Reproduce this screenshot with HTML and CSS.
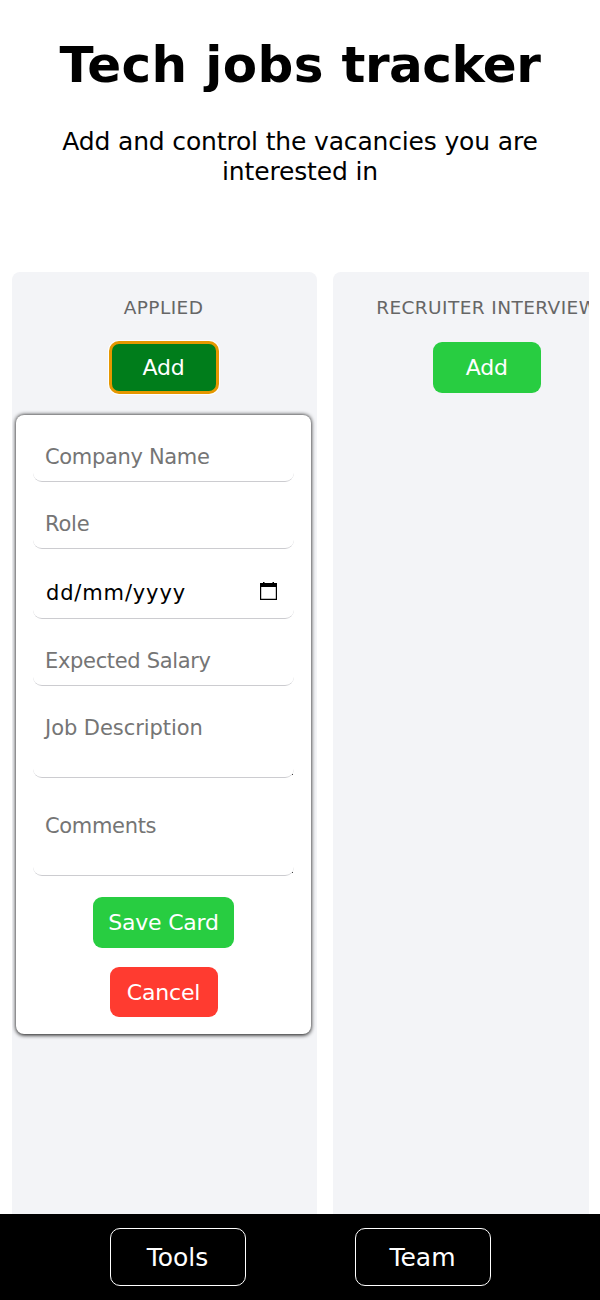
FILE: index.html
```html
<!DOCTYPE html>
<html lang="en">
<head>
<meta charset="utf-8">
<title>Tech jobs tracker</title>
<link rel="stylesheet" href="styles.css">
</head>
<body>
<header class="header">
  <h1 class="title">Tech jobs <span class="tight">tracker</span></h1>
  <p class="subtitle">Add and control the vacancies you are<br>interested in</p>
</header>
<main class="board">
  <section class="column first">
    <h2 class="column-title">APPLIED</h2>
    <button class="btn btn-add btn-active">Add</button>
    <form class="card">
      <div class="field company">Company Name</div>
      <div class="field role">Role</div>
      <div class="field date"><span>dd/mm/yyyy</span>
        <svg class="calendar" viewBox="0 0 17 19" width="17" height="19"><path d="M3 0h1.500v1h8V0H14v1h3v17H0V1h3zM1.200 5v11.800h14.600V5z" fill="#000" fill-rule="evenodd"/></svg>
      </div>
      <div class="field salary">Expected Salary</div>
      <div class="field area description">Job Description</div>
      <div class="field area comments">Comments</div>
      <button class="btn btn-save" type="button">Save Card</button>
      <button class="btn btn-cancel" type="button">Cancel</button>
    </form>
  </section>
  <section class="column">
    <h2 class="column-title">RECRUITER INTERVIEW</h2>
    <button class="btn btn-add">Add</button>
  </section>
</main>
<footer class="footer">
  <button class="nav-btn">Tools</button>
  <button class="nav-btn">Team</button>
</footer>
</body>
</html>
```
FILE: styles.css
```css
* { box-sizing: border-box; }
body {
  margin: 0;
  height: 1300px;
  display: flex;
  flex-direction: column;
  overflow: hidden;
  background: #fff;
  color: #000;
  font-family: Verdana, "DejaVu Sans", sans-serif;
}
.header { height: 272px; flex: none; text-align: center; padding-top: 35px; }
.title { margin: 0; font-size: 50px; line-height: 60px; font-weight: 700; white-space: nowrap; letter-spacing: 0.35px; }
.tight { letter-spacing: -0.5px; }
.subtitle { margin: 32px 0 0; font-size: 25px; line-height: 30px; letter-spacing: -0.16px; white-space: nowrap; }
.board {
  flex: 1;
  display: flex;
  gap: 16px;
  margin: 0 11px 0 12px;
  overflow: hidden;
}
.column {
  flex: none;
  width: 307.5px;
  background: #f3f4f7;
  border-radius: 8px 8px 0 0;
  display: flex;
  flex-direction: column;
  align-items: center;
  padding-top: 24px;
}
.first { width: 305px; padding-right: 2px; }
.column-title {
  margin: 0 0 23px;
  height: 23px;
  line-height: 23px;
  font-size: 18.5px;
  letter-spacing: 0.42px;
  font-weight: 400;
  color: #666;
  white-space: nowrap;
}
.btn {
  flex: none;
  display: block;
  border: 0;
  border-radius: 9px;
  padding: 2px 0 0;
  width: 108px;
  height: 50.5px;
  font: 22px/48px Verdana, "DejaVu Sans", sans-serif;
  letter-spacing: -0.2px;
  color: #fff;
  background: #28cd41;
  text-align: center;
  white-space: nowrap;
}
.column > .btn-active {
  background: #007d1b;
  outline: 3px solid #e59700;
  outline-offset: -2px;
  box-shadow: 0 0 0 2px #fff;
}
.card {
  width: 295px;
  height: 619px;
  margin-top: 22.5px;
  padding: 17px 17px 0;
  display: flex;
  flex-direction: column;
  align-items: center;
  background: #fff;
  border-radius: 8px;
  box-shadow: 0 0.5px 4px #000;
}
.field {
  flex: none;
  width: 261px;
  height: 50px;
  margin-bottom: 17px;
  padding: 0 12px;
  line-height: 50px;
  font-size: 21px;
  letter-spacing: -0.33px;
  color: #757575;
  border-bottom: 1px solid #ccccd0;
  border-radius: 9px;
  white-space: nowrap;
}
.role { letter-spacing: -0.2px; }
.description { letter-spacing: -0.06px; }
.date {
  height: 53px;
  color: #000;
  letter-spacing: 0.85px;
  display: flex;
  justify-content: space-between;
  align-items: center;
  padding: 2px 17px 0 13px;
}
.calendar { margin-bottom: 3px; }
.area { position: relative; height: 75px; margin-bottom: 23px; }
.area::after {
  content: "";
  position: absolute;
  right: 1px;
  bottom: 2px;
  width: 1.5px;
  height: 1.5px;
  background: #444;
}
.comments { margin-bottom: 21px; }
.btn-save { width: 141px; margin-bottom: 19px; }
.btn-cancel { background: #ff3b30; }
.footer {
  flex: none;
  height: 86px;
  padding-top: 14px;
  display: flex;
  justify-content: center;
  gap: 109px;
  background: #000;
}
.nav-btn {
  width: 136px;
  height: 58px;
  padding: 2px 0 0;
  border: 1.5px solid #fff;
  border-radius: 10px;
  background: #000;
  color: #fff;
  font: 25px/54px Verdana, "DejaVu Sans", sans-serif;
}
```
